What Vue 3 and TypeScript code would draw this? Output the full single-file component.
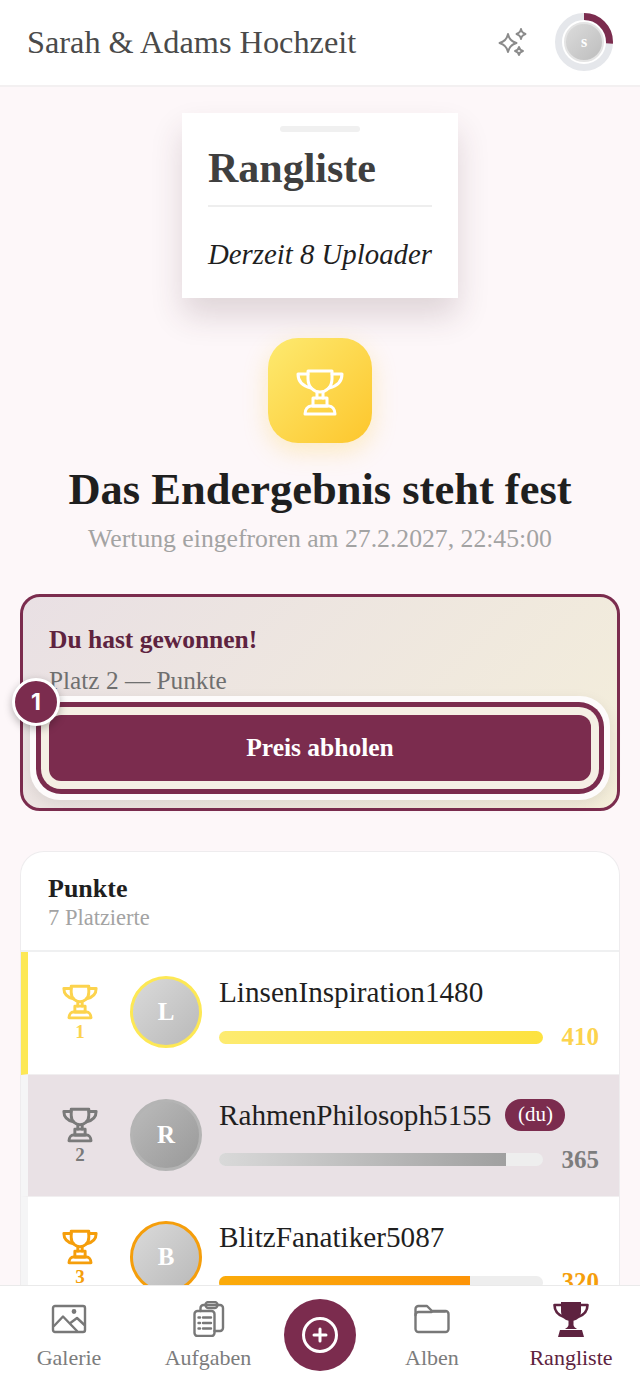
<script setup lang="ts">
interface Row {
  rank: number
  name: string
  initial: string
  score: number
  fill: number
  tone: string
  you?: boolean
}
const rows: Row[] = [
  { rank: 1, name: 'LinsenInspiration1480', initial: 'L', score: 410, fill: 100, tone: 'gold' },
  { rank: 2, name: 'RahmenPhilosoph5155', initial: 'R', score: 365, fill: 88.6, tone: 'silver', you: true },
  { rank: 3, name: 'BlitzFanatiker5087', initial: 'B', score: 320, fill: 77.5, tone: 'bronze' }
]
const navLeft = [
  { label: 'Galerie', icon: 'image' },
  { label: 'Aufgaben', icon: 'tasks' }
]
</script>

<template>
  <div class="app">
    <header class="topbar">
      <h1 class="brand">Sarah &amp; Adams Hochzeit</h1>
      <div class="top-actions">
        <svg class="sparkle" viewBox="0 0 32 32" fill="none" stroke="#8b8b8b" stroke-width="1.9" stroke-linejoin="round">
          <path d="M12 8 C13 13 15 15.5 20.5 17 C15 18.5 13 21 12 26 C11 21 9 18.5 3.5 17 C9 15.5 11 13 12 8Z" />
          <path d="M25 3 C25.5 6 26.5 7 29.5 8 C26.5 9 25.5 10 25 13 C24.5 10 23.5 9 20.5 8 C23.5 7 24.5 6 25 3Z" />
          <path d="M23 21 C23.4 23.4 24.2 24.2 27 25 C24.2 25.8 23.4 26.6 23 29 C22.6 26.6 21.8 25.800 19 25 C21.8 24.2 22.6 23.4 23 21Z" />
        </svg>
        <div class="me">
          <svg viewBox="0 0 60 60" class="me-ring">
            <circle cx="30" cy="30" r="25.5" fill="none" stroke="#e5e7eb" stroke-width="7" />
            <circle cx="30" cy="30" r="25.5" fill="none" stroke="#7b2c4e" stroke-width="7" pathLength="100" stroke-dasharray="26 74" transform="rotate(-90 30 30)" />
          </svg>
          <span class="me-avatar">s</span>
        </div>
      </div>
    </header>

    <main class="page">
      <section class="title-card">
        <span class="handle"></span>
        <h2>Rangliste</h2>
        <p>Derzeit 8 Uploader</p>
      </section>

      <section class="hero">
        <div class="hero-icon">
          <svg viewBox="0 0 60 60" width="60" height="60" fill="none" stroke="#fff" stroke-width="3" stroke-linejoin="round" stroke-linecap="round">
            <path d="M18 10H42V18C42 26 36 31 30 31C24 31 18 26 18 18Z" />
            <path d="M18 13H8C8 20 12 25 21 27M42 13H52C52 20 48 25 39 27" />
            <path d="M27 31V37M33 31V37" />
            <path d="M23 37H37V45H23Z" />
            <path d="M21 45H39C42 45 45 48 45 53H15C15 48 18 45 21 45Z" />
          </svg>
        </div>
        <h2>Das Endergebnis steht fest</h2>
        <p>Wertung eingefroren am 27.2.2027, 22:45:00</p>
      </section>

      <section class="win">
        <strong>Du hast gewonnen!</strong>
        <span class="win-sub">Platz 2 — Punkte</span>
        <div class="cta-wrap">
          <button class="cta">Preis abholen</button>
          <span class="step">1</span>
        </div>
      </section>

      <section class="board">
        <div class="board-head">
          <strong>Punkte</strong>
          <span>7 Platzierte</span>
        </div>
        <div v-for="row in rows" :key="row.rank" class="row" :class="[row.tone, { you: row.you }]">
          <div class="rank">
            <svg viewBox="0 0 60 60" width="44" height="44" fill="none" stroke="currentColor" stroke-width="4" stroke-linejoin="round" stroke-linecap="round">
              <path d="M18 10H42V18C42 26 36 31 30 31C24 31 18 26 18 18Z" />
              <path d="M18 13H8C8 20 12 25 21 27M42 13H52C52 20 48 25 39 27" />
              <path d="M27 31V37M33 31V37" />
              <path d="M23 37H37V45H23Z" />
              <path d="M21 45H39C42 45 45 48 45 53H15C15 48 18 45 21 45Z" />
            </svg>
            <span>{{ row.rank }}</span>
          </div>
          <div class="avatar">{{ row.initial }}</div>
          <div class="body">
            <div class="name-line">
              <span class="name">{{ row.name }}</span>
              <span v-if="row.you" class="du">(du)</span>
            </div>
            <div class="bar-line">
              <div class="track"><div class="fill" :style="{ width: row.fill + '%' }"></div></div>
              <b class="score">{{ row.score }}</b>
            </div>
          </div>
        </div>
      </section>
    </main>

    <nav class="nav">
      <a v-for="item in navLeft" :key="item.label" class="nav-item">
        <svg v-if="item.icon === 'image'" viewBox="0 0 36 36" class="nav-icon">
          <rect x="2" y="5" width="32" height="26" rx="2" />
          <path d="M3 25L12 15.5L26 30M20 21.5L26 17L33.5 24" />
          <circle cx="23" cy="10.5" r="1.2" />
        </svg>
        <svg v-else viewBox="0 0 36 36" class="nav-icon">
          <rect x="4.5" y="10" width="20" height="25" rx="3" />
          <path d="M10.5 10V7a3 3 0 0 1 3-3H30a3 3 0 0 1 3 3v20a3 3 0 0 1-3 3h-5.5" />
          <path d="M15.5 4V3.500a3.500 2.500 0 0 1 3.500-2.500h5a3.500 2.500 0 0 1 3.500 2.500V4a3 3 0 0 1-3 3h-6a3 3 0 0 1-3-3z" />
          <path d="M8.500 16.500h1.500M13 16.500h8M8.500 22h1.500M13 22h8M8.500 27.500h1.500M13 27.500h8" />
        </svg>
        <span>{{ item.label }}</span>
      </a>
      <div class="plus-cell">
        <button class="plus" aria-label="Hochladen">
          <svg viewBox="0 0 40 40" width="40" height="40" fill="none" stroke="#fff" stroke-width="3" stroke-linecap="round">
            <circle cx="20" cy="20" r="16.500" />
            <path d="M20 14V26M14 20H26" />
          </svg>
        </button>
      </div>
      <a class="nav-item">
        <svg viewBox="0 0 36 36" class="nav-icon">
          <path d="M1.500 28V8a3 3 0 0 1 3-3h8.500l5 5h13.500a3 3 0 0 1 3 3v15a3 3 0 0 1-3 3h-27a3 3 0 0 1-3-3z" />
          <path d="M1.500 14a3 3 0 0 1 3-3h13" />
          <path d="M18 10.500h13" />
        </svg>
        <span>Alben</span>
      </a>
      <a class="nav-item active">
        <svg viewBox="0 0 36 36" class="nav-icon solid">
          <path d="M8 1H28V10C28 16 24 20 18 20C12 20 8 16 8 10Z" />
          <path class="handle-line" d="M8 4H1.500C1.500 10 5 14 11 16M28 4H34.500C34.500 10 31 14 25 16" />
          <path d="M15.500 19H20.500V24C20.500 26 23 27 24 28H12C13 27 15.500 26 15.500 24Z" />
          <path d="M7 29H29L31 36H5Z" />
        </svg>
        <span>Rangliste</span>
      </a>
    </nav>
  </div>
</template>

<style>
html,
body {
  margin: 0;
  padding: 0;
  background: #fdf7f9;
}
</style>

<style scoped>
* {
  box-sizing: border-box;
}

.app {
  width: 640px;
  height: 1385px;
  display: flex;
  flex-direction: column;
  overflow: hidden;
  background: #fdf7f9;
  font-family: 'Liberation Serif', 'DejaVu Serif', serif;
  color: #1f1f1f;
}

h1,
h2,
p {
  margin: 0;
}

.topbar {
  flex: 0 0 87px;
  display: flex;
  align-items: center;
  justify-content: space-between;
  padding: 0 26px 1px 27px;
  background: #fff;
  border-bottom: 2px solid #f3f0f1;
}

.brand {
  font-size: 32.300px;
  font-weight: 400;
  line-height: 40px;
  color: #4a4a4a;
}

.top-actions {
  display: flex;
  align-items: center;
  gap: 26px;
}

.sparkle {
  width: 32px;
  height: 32px;
}

.me {
  position: relative;
  width: 60px;
  height: 60px;
}

.me-ring {
  display: block;
  width: 60px;
  height: 60px;
}

.me-avatar {
  position: absolute;
  left: 10px;
  top: 10px;
  width: 40px;
  height: 40px;
  border-radius: 50%;
  display: flex;
  align-items: center;
  justify-content: center;
  background: linear-gradient(135deg, #dcdcdc, #bdbdbd);
  border: 2px solid #e4e4e4;
  color: #fff;
  font-weight: 700;
  font-size: 16px;
}

.page {
  flex: 1;
  min-height: 0;
  overflow: hidden;
  padding: 26px 20px 0;
  display: flex;
  flex-direction: column;
}

.title-card {
  flex: none;
  align-self: center;
  width: 276px;
  height: 185px;
  padding: 13px 26px 0;
  background: #fff;
  box-shadow: 0 18px 30px rgba(70, 40, 50, 0.16);
  display: flex;
  flex-direction: column;
}

.handle {
  flex: none;
  align-self: center;
  width: 80px;
  height: 6px;
  border-radius: 3px;
  background: #f0f0f0;
}

.title-card h2 {
  flex: none;
  height: 75px;
  border-bottom: 2px solid #eeeeee;
  font-size: 42px;
  line-height: 72px;
  font-weight: 700;
  color: #3f3f3f;
}

.title-card p {
  flex: none;
  margin-top: 27px;
  font-size: 28.8px;
  line-height: 40px;
  font-style: italic;
  white-space: nowrap;
  color: #1f1f1f;
}

.hero {
  flex: none;
  margin-top: 40px;
  display: flex;
  flex-direction: column;
  align-items: center;
}

.hero-icon {
  width: 104px;
  height: 105px;
  border-radius: 30px;
  display: flex;
  align-items: center;
  justify-content: center;
  background: linear-gradient(135deg, #fdea70, #fdc62c);
  box-shadow: 0 8px 24px rgba(253, 200, 50, 0.28);
}

.hero h2 {
  margin-top: 21px;
  font-size: 44.500px;
  line-height: 50px;
  font-weight: 700;
  color: #1f1f1f;
}

.hero p {
  margin-top: 8px;
  font-size: 25.700px;
  line-height: 34px;
  color: #a3a3a3;
}

.win {
  flex: none;
  margin-top: 38px;
  height: 217px;
  padding: 28px 26px 0;
  border: 3px solid #7b2c4e;
  border-radius: 20px;
  background: linear-gradient(135deg, #e9e0e4, #f4eeda);
  display: flex;
  flex-direction: column;
}

.win strong {
  font-size: 25.500px;
  line-height: 30px;
  color: #5e2340;
}

.win-sub {
  margin-top: 10px;
  font-size: 25.300px;
  line-height: 30px;
  color: #6f6f6f;
}

.cta-wrap {
  position: relative;
  margin-top: 20px;
}

.cta {
  display: block;
  width: 100%;
  height: 66px;
  border: 0;
  border-radius: 12px;
  background: #7b2c4e;
  color: #fff;
  font-family: inherit;
  font-size: 25.500px;
  font-weight: 700;
  box-shadow:
    0 0 0 8px #f5efe4,
    0 0 0 13px #7b2c4e,
    0 0 0 19px #fdfbfb,
    0 4px 14px 19px rgba(0, 0, 0, 0.08);
}

.step {
  position: absolute;
  left: -37px;
  top: -37px;
  width: 48px;
  height: 48px;
  border: 3px solid #fff;
  border-radius: 50%;
  display: flex;
  align-items: center;
  justify-content: center;
  background: #7b2c4e;
  color: #fff;
  font-family: 'Inter', 'Noto Sans', sans-serif;
  font-size: 23px;
  font-weight: 700;
  box-shadow: 0 3px 8px rgba(0, 0, 0, 0.28);
}

.board {
  flex: none;
  margin-top: 40px;
  background: #fff;
  border: 1px solid #eeecee;
  border-bottom: 0;
  border-radius: 24px 24px 0 0;
  overflow: hidden;
}

.board-head {
  height: 100px;
  padding: 22px 27px 0;
  display: flex;
  flex-direction: column;
  border-bottom: 2px solid #eff0f1;
}

.board-head strong {
  font-size: 26px;
  line-height: 30px;
  color: #1f1f1f;
}

.board-head span {
  font-size: 22.500px;
  line-height: 28px;
  color: #a3a3a3;
}

.row {
  height: 122.500px;
  padding: 24px 20px 0 12px;
  display: flex;
  align-items: flex-start;
  border-left: 7px solid #f5f5f6;
  border-bottom: 1px solid #f1eff0;
}

.row.gold {
  --tone: #fde855;
  --num: #fcd34d;
  --bar: linear-gradient(90deg, #fdeb70, #fde23f);
  border-left-color: #fde855;
}

.row.silver {
  --tone: #b4b4b4;
  --num: #7a7a7a;
  --bar: linear-gradient(90deg, #d9d9d9, #a0a0a0);
}

.row.bronze {
  --tone: #f59e0b;
  --num: #f59e0b;
  --bar: linear-gradient(90deg, #fbab0a, #fd9408);
}

.row.you {
  background: #e9e1e5;
}

.rank {
  flex: 0 0 80px;
  padding-top: 3px;
  display: flex;
  flex-direction: column;
  align-items: center;
  color: var(--num);
}

.rank svg {
  display: block;
}

.rank span {
  margin-top: -2px;
  font-size: 19px;
  line-height: 22px;
  font-weight: 700;
}

.avatar {
  flex: none;
  width: 72px;
  height: 72px;
  margin-left: 10px;
  border-radius: 50%;
  border: 3px solid var(--tone);
  display: flex;
  align-items: center;
  justify-content: center;
  background: linear-gradient(135deg, #dadada, #b9b9b9);
  color: #fff;
  font-size: 25px;
  font-weight: 700;
}

.row.silver .avatar {
  background: linear-gradient(135deg, #bbb, #999);
}

.body {
  flex: 1;
  min-width: 0;
  margin-left: 17px;
}

.name-line {
  height: 32px;
  display: flex;
  align-items: center;
  gap: 14px;
}

.name {
  font-size: 29.200px;
  line-height: 32px;
  color: #1f1f1f;
}

.du {
  width: 60px;
  height: 32px;
  border-radius: 16px;
  display: flex;
  align-items: center;
  justify-content: center;
  background: #7b2c4e;
  color: #fff;
  font-size: 21px;
}

.bar-line {
  margin-top: 12px;
  height: 34px;
  display: flex;
  align-items: center;
  gap: 19px;
}

.track {
  flex: 1;
  height: 13px;
  border-radius: 7px;
  background: #eeeeee;
  overflow: hidden;
}

.fill {
  height: 100%;
  background: var(--bar);
}

.score {
  font-size: 25px;
  color: var(--num);
  line-height: 34px;
}

.row.silver .score {
  color: #7d7d7d;
}

.nav {
  flex: 0 0 100px;
  display: grid;
  grid-template-columns: 138px 140px 84px 140px 138px;
  background: #fff;
  border-top: 1px solid #eaeaea;
  position: relative;
}

.nav-item {
  display: flex;
  flex-direction: column;
  align-items: center;
  padding-top: 15px;
  color: #7c7c7c;
  font-size: 22px;
  line-height: 28px;
}

.nav-item.active {
  color: #5e2340;
}

.nav-item span {
  margin-top: 7px;
}

.nav-icon {
  width: 36px;
  height: 36px;
  fill: none;
  stroke: #787878;
  stroke-width: 2.4;
  stroke-linejoin: round;
  stroke-linecap: round;
}

.nav-icon.solid {
  fill: #5e2340;
  stroke: none;
}

.nav-icon .handle-line {
  fill: none;
  stroke: #5e2340;
  stroke-width: 2.6;
}

.plus-cell {
  display: flex;
  justify-content: center;
  padding-top: 13px;
}

.plus {
  width: 72px;
  height: 72px;
  border: 0;
  padding: 0;
  border-radius: 50%;
  display: flex;
  align-items: center;
  justify-content: center;
  background: #7b2c4e;
}
</style>
